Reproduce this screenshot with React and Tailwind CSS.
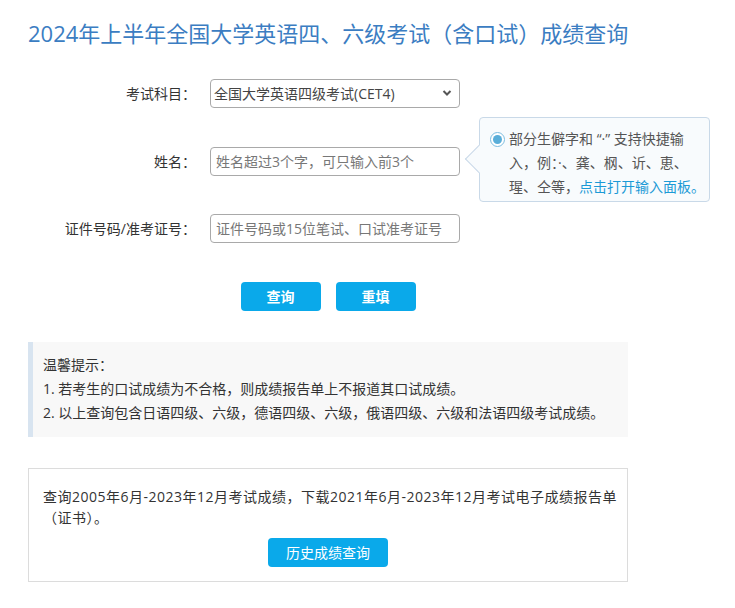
import React from "react";

const font = { fontFamily: '"Open Sans", "Noto Sans CJK SC", sans-serif' };

function Row({ label, children, className = "" }) {
  return (
    <div className={"flex items-center h-[29px] " + className}>
      <div className="w-[168px] text-right text-[14px] text-[#333] pr-[0px]">{label}</div>
      <div className="ml-[14px] w-[250px] h-[29px] relative">{children}</div>
    </div>
  );
}

export default function App() {
  return (
    <div className="bg-white w-[735px] min-h-[608px] pl-[28px] text-[#333]" style={font}>
      <h1 className="pt-[18px] text-[22px] leading-[30px] text-[#3b7dc2] font-normal tracking-[0px]">
        2024年上半年全国大学英语四、六级考试（含口试）成绩查询
      </h1>

      <div className="relative mt-[31px]">
        <Row label="考试科目：">
          <select
            className="appearance-none w-full h-full border border-[#a9a9a9] rounded-[4px] pl-[3px] text-[14px] text-[#444] bg-white outline-none"
            defaultValue="cet4"
            style={font}
          >
            <option value="cet4">全国大学英语四级考试(CET4)</option>
          </select>
          <svg
            className="absolute right-[8px] top-[10px] pointer-events-none"
            width="10"
            height="8"
            viewBox="0 0 10 8"
          >
            <path d="M1.5 2 L5 5.5 L8.5 2" stroke="#555" strokeWidth="2" fill="none" />
          </svg>
        </Row>
        <Row label="姓名：" className="mt-[39px]">
          <input
            className="w-full h-full border border-[#a9a9a9] rounded-[4px] pl-[5px] text-[14px] bg-white outline-none placeholder:text-[#777]"
            placeholder="姓名超过3个字，可只输入前3个"
            style={font}
          />
        </Row>
        <Row label="证件号码/准考证号：" className="mt-[38px]">
          <input
            className="w-full h-full border border-[#a9a9a9] rounded-[4px] pl-[5px] text-[14px] bg-white outline-none placeholder:text-[#777]"
            placeholder="证件号码或15位笔试、口试准考证号"
            style={font}
          />
        </Row>

        {/* tooltip */}
        <div className="absolute left-[451px] top-[38px] w-[231px] h-[85px] bg-[#f8fbfd] border border-[#c9d9e8] rounded-[4px]">
          <div className="absolute left-[-11px] top-[31px] w-[20px] h-[20px] rotate-45 bg-[#f8fbfd] border-l border-b border-[#c9d9e8]" />
          <div className="relative flex pt-[9px] pl-[10px]">
            <div className="mt-[5px] w-[15px] h-[15px] rounded-full border border-[#7dbde0] bg-white flex items-center justify-center shrink-0">
              <div className="w-[9px] h-[9px] rounded-full bg-[#5aaed9]" />
            </div>
            <div className="ml-[4px] text-[14px] leading-[24px] text-[#555] whitespace-nowrap">
              部分生僻字和 “·” 支持快捷输
              <br />
              入，例：·、龚、㭎、䜣、恵、
              <br />
              瑆、仝等，<span className="text-[#1c9ad6]">点击打开输入面板。</span>
            </div>
          </div>
        </div>
      </div>

      <div className="w-[600px] flex justify-center gap-[15px] mt-[39px]">
        <button className="w-[80px] h-[29px] rounded-[4px] bg-[#0aa9ea] text-white text-[14px] font-bold">
          查询
        </button>
        <button className="w-[80px] h-[29px] rounded-[4px] bg-[#0aa9ea] text-white text-[14px] font-bold">
          重填
        </button>
      </div>

      <div className="w-[600px] mt-[31px] bg-[#f8f8f8] border-l-[5px] border-[#d8e4f0] pl-[10px] pt-[11px] pb-[12px] text-[14px] leading-[24px] text-[#333]">
        <div>温馨提示：</div>
        <div>1. 若考生的口试成绩为不合格，则成绩报告单上不报道其口试成绩。</div>
        <div>2. 以上查询包含日语四级、六级，德语四级、六级，俄语四级、六级和法语四级考试成绩。</div>
      </div>

      <div className="w-[600px] h-[114px] mt-[31px] border border-[#dcdcdc] pt-[17px] px-[14px]">
        <div className="text-[14px] leading-[21px] text-[#333] whitespace-nowrap tracking-[0.5px]">
          查询2005年6月-2023年12月考试成绩，下载2021年6月-2023年12月考试电子成绩报告单
          <br />
          （证书）。
        </div>
        <div className="flex justify-center mt-[10px]">
          <button className="w-[120px] h-[29px] rounded-[4px] bg-[#0aa9ea] text-white text-[14px]">
            历史成绩查询
          </button>
        </div>
      </div>
    </div>
  );
}
